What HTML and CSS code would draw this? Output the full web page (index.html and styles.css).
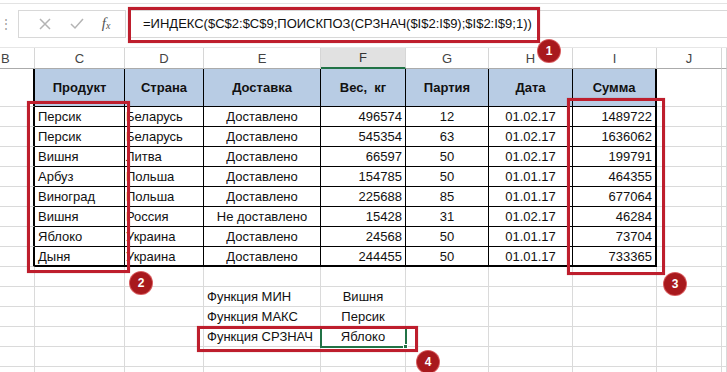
FILE: index.html
```html
<!DOCTYPE html>
<html lang="ru">
<head>
<meta charset="utf-8">
<link rel="stylesheet" href="styles.css">
</head>
<body>
<div class="page">
  <div class="ribbon-edge"></div>
  <div class="fbar">
    <div class="grip">⋮</div>
    <div class="fbtns">
      <svg class="ic" width="14" height="14" viewBox="0 0 14 14"><path d="M2 2 L12 12 M12 2 L2 12" stroke="#b4b4b4" stroke-width="1.5" fill="none"/></svg>
      <svg class="ic" width="16" height="14" viewBox="0 0 16 14"><path d="M2 7 L6 11 L14 2" stroke="#b4b4b4" stroke-width="1.5" fill="none"/></svg>
      <span class="fx">f<sub>x</sub></span>
    </div>
    <div class="finput">=ИНДЕКС($C$2:$C$9;ПОИСКПОЗ(СРЗНАЧ($I$2:I$9);$I$2:I$9;1))</div>
  </div>

  <div class="sheet">
    <div class="ch chb">B</div><div class="ch">C</div><div class="ch">D</div><div class="ch">E</div><div class="ch chsel">F</div><div class="ch">G</div><div class="ch">H</div><div class="ch">I</div><div class="ch">J</div><div class="ch"></div>

    <div class="c tl"></div><div class="c th">Продукт</div><div class="c th">Страна</div><div class="c th">Доставка</div><div class="c th">Вес,&nbsp; кг</div><div class="c th">Партия</div><div class="c th">Дата</div><div class="c th tr">Сумма</div><div class="c"></div><div class="c"></div>

    <div class="c tl"></div><div class="c t l">Персик</div><div class="c t l0">Беларусь</div><div class="c t m">Доставлено</div><div class="c t r">496574</div><div class="c t m">12</div><div class="c t m">01.02.17</div><div class="c t r tr">1489722</div><div class="c"></div><div class="c"></div>
    <div class="c tl"></div><div class="c t l">Персик</div><div class="c t l0">Беларусь</div><div class="c t m">Доставлено</div><div class="c t r">545354</div><div class="c t m">63</div><div class="c t m">01.02.17</div><div class="c t r tr">1636062</div><div class="c"></div><div class="c"></div>
    <div class="c tl"></div><div class="c t l">Вишня</div><div class="c t l0">Литва</div><div class="c t m">Доставлено</div><div class="c t r">66597</div><div class="c t m">50</div><div class="c t m">01.02.17</div><div class="c t r tr">199791</div><div class="c"></div><div class="c"></div>
    <div class="c tl"></div><div class="c t l">Арбуз</div><div class="c t l0">Польша</div><div class="c t m">Доставлено</div><div class="c t r">154785</div><div class="c t m">50</div><div class="c t m">01.01.17</div><div class="c t r tr">464355</div><div class="c"></div><div class="c"></div>
    <div class="c tl"></div><div class="c t l">Виноград</div><div class="c t l0">Польша</div><div class="c t m">Доставлено</div><div class="c t r">225688</div><div class="c t m">85</div><div class="c t m">01.01.17</div><div class="c t r tr">677064</div><div class="c"></div><div class="c"></div>
    <div class="c tl"></div><div class="c t l">Вишня</div><div class="c t l0">Россия</div><div class="c t m">Не доставлено</div><div class="c t r">15428</div><div class="c t m">31</div><div class="c t m">01.02.17</div><div class="c t r tr">46284</div><div class="c"></div><div class="c"></div>
    <div class="c tl"></div><div class="c t l">Яблоко</div><div class="c t l0">Украина</div><div class="c t m">Доставлено</div><div class="c t r">24568</div><div class="c t m">50</div><div class="c t m">01.01.17</div><div class="c t r tr">73704</div><div class="c"></div><div class="c"></div>
    <div class="c tl"></div><div class="c t l lastr">Дыня</div><div class="c t l0 lastr">Украина</div><div class="c t m lastr">Доставлено</div><div class="c t r lastr">244455</div><div class="c t m lastr">50</div><div class="c t m lastr">01.01.17</div><div class="c t r tr lastr">733365</div><div class="c"></div><div class="c"></div>

    <div class="c"></div><div class="c"></div><div class="c"></div><div class="c"></div><div class="c"></div><div class="c"></div><div class="c"></div><div class="c"></div><div class="c"></div><div class="c"></div>
    <div class="c"></div><div class="c"></div><div class="c"></div><div class="c l ov">Функция МИН</div><div class="c m">Вишня</div><div class="c"></div><div class="c"></div><div class="c"></div><div class="c"></div><div class="c"></div>
    <div class="c"></div><div class="c"></div><div class="c"></div><div class="c l ov">Функция МАКС</div><div class="c m">Персик</div><div class="c"></div><div class="c"></div><div class="c"></div><div class="c"></div><div class="c"></div>
    <div class="c"></div><div class="c"></div><div class="c"></div><div class="c l ov">Функция СРЗНАЧ</div><div class="c m selcell">Яблоко<span class="handle"></span></div><div class="c"></div><div class="c"></div><div class="c"></div><div class="c"></div><div class="c"></div>
    <div class="c"></div><div class="c"></div><div class="c"></div><div class="c"></div><div class="c"></div><div class="c"></div><div class="c"></div><div class="c"></div><div class="c"></div><div class="c"></div>
    <div class="c"></div><div class="c"></div><div class="c"></div><div class="c"></div><div class="c"></div><div class="c"></div><div class="c"></div><div class="c"></div><div class="c"></div><div class="c"></div>
  </div>

  <div class="box box1"></div>
  <div class="box box2"></div>
  <div class="box box3"></div>
  <div class="box box4"></div>
  <div class="badge b1">1</div>
  <div class="badge b2">2</div>
  <div class="badge b3">3</div>
  <div class="badge b4">4</div>
</div>
</body>
</html>
```

FILE: styles.css
```css
* { box-sizing: border-box; }
html, body { margin: 0; padding: 0; background: #fff; }
body { font-family: "Liberation Sans", Arial, sans-serif; font-size: 13px; color: #111; }
.page { position: relative; width: 727px; height: 372px; overflow: hidden; }

.ribbon-edge { height: 4px; border-bottom: 1px solid #e3e3e3; }
.fbar { height: 44px; display: flex; align-items: center; padding-bottom: 4px; border-bottom: 1px solid #e6e6e6; }
.grip { width: 18px; color: #9a9a9a; font-size: 12px; text-align: center; padding-right: 8px; }
.fbtns { width: 108px; height: 28px; border: 1px solid #d8d8d8; display: flex; align-items: center; justify-content: space-around; padding: 0 6px 0 10px; }
.fx { font-family: "Liberation Serif", serif; font-style: italic; color: #555; font-size: 15px; }
.fx sub { font-size: 10px; vertical-align: -1px; }
.finput { flex: 1; height: 28px; margin-left: 2px; border: 1px solid #d8d8d8; border-right: none; display: flex; align-items: center; padding-left: 14px; font-size: 13px; color: #111; white-space: nowrap; }

.sheet {
  display: grid;
  grid-template-columns: 35px 90px 79px 117px 85px 83px 84px 84px 65px 5px;
  grid-template-rows: 21px 38px repeat(8, 20px) repeat(6, 20px);
}
.ch { border-right: 1px solid #d6d6d6; border-bottom: 1px solid #ababab; color: #444; font-size: 13px; display: flex; align-items: center; justify-content: center; background: #fff; }
.chb { justify-content: flex-start; padding-left: 1px; }
.chsel { background: #e1e1e1; border-bottom: 2px solid #217346; color: #333; }

.c { border-right: 1px solid #dadada; border-bottom: 1px solid #dadada; display: flex; align-items: center; white-space: nowrap; }
.tl { border-right: 2px solid #000; }
.th { background: #b8cce4; font-weight: bold; justify-content: center; border-right-color: #000; border-bottom-color: #000; }
.t { border-right-color: #000; border-bottom-color: #000; }
.tr { border-right: 2px solid #000; }
.lastr { border-bottom: 2px solid #000; }
.l { padding-left: 3px; }
.l0 { padding-left: 1px; }
.m { justify-content: center; }
.r { justify-content: flex-end; padding-right: 3px; }
.ov { overflow: visible; }
.selcell { position: relative; outline: 2px solid #217346; outline-offset: -1px; }
.handle { position: absolute; right: -3px; bottom: -3px; width: 5px; height: 5px; background: #217346; border: 1px solid #fff; }

.box { position: absolute; border: 3px solid #be1e2d; box-shadow: 0 0 1px rgba(120,0,0,0.4); }
.box1 { left: 128px; top: 7px; width: 412px; height: 36px; }
.box2 { left: 27px; top: 101px; width: 103px; height: 172px; }
.box3 { left: 567px; top: 98px; width: 98px; height: 177px; }
.box4 { left: 197px; top: 326px; width: 221px; height: 26px; }

.badge { position: absolute; width: 22px; height: 22px; border-radius: 50%; background: #a8191d; color: #fff; font-weight: bold; font-size: 12px; display: flex; align-items: center; justify-content: center; box-shadow: 0 0 0 1px #d75b5e; }
.b1 { left: 538px; top: 40px; }
.b2 { left: 130px; top: 272px; }
.b3 { left: 664px; top: 273px; }
.b4 { left: 417px; top: 351px; }
```
